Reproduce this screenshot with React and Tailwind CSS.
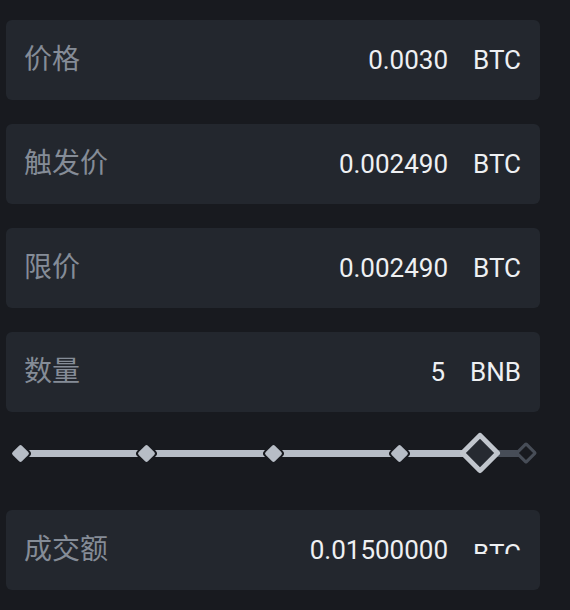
import { useState } from "react";

const fields = [
  { label: "价格", value: "0.0030", unit: "BTC" },
  { label: "触发价", value: "0.002490", unit: "BTC" },
  { label: "限价", value: "0.002490", unit: "BTC" },
  { label: "数量", value: "5", unit: "BNB" },
];

const FONT = { fontFamily: 'Roboto, "Noto Sans CJK SC", sans-serif' };

function Field({ label, value, unit, clipUnit }) {
  return (
    <div className="h-[80px] rounded-md bg-[#23272e] flex items-center justify-between pl-[18px] pr-[19px]">
      <span className="text-[28px] text-[#858c97] leading-[30px]">{label}</span>
      <div className="flex items-start h-[30px] leading-[30px] text-[26px] text-[#eef0f3] gap-[25px]">
        <span>{value}</span>
        {clipUnit ? (
          <span className="block h-[19px] overflow-hidden">
            <span className="block translate-y-[4px]">{unit}</span>
          </span>
        ) : (
          <span>{unit}</span>
        )}
      </div>
    </div>
  );
}

function Mark({ left }) {
  return (
    <div
      className="absolute top-1/2 w-[13px] h-[13px] -ml-[6.5px] -mt-[6.5px] rotate-45 rounded-[2px] bg-[#b7bdc6] ring-2 ring-[#181a1f]"
      style={{ left }}
    />
  );
}

function Slider() {
  const [pct] = useState(91);
  const marks = [0, 25, 50, 75];
  return (
    <div className="h-[60px] flex items-center px-[14px]">
      <div className="relative w-full h-[7px] pr-[6px]">
        <div className="absolute inset-y-0 left-0 right-0 bg-[#474d57]" />
        <div className="absolute inset-y-0 left-0 bg-[#b7bdc6]" style={{ width: `${pct}%` }} />
        {marks.map((m) => (
          <Mark key={m} left={`${m}%`} />
        ))}
        <div
          className="absolute top-1/2 w-[16px] h-[16px] -ml-[8px] -mt-[8px] rotate-45 rounded-[2px] border-[3px] border-[#474d57] bg-[#181a1f]"
          style={{ left: "100%" }}
        />
        <div
          className="absolute top-1/2 w-[30px] h-[30px] -ml-[15px] -mt-[15px] rotate-45 rounded-[3px] border-[5px] border-[#c1c6cd] bg-[#262a31]"
          style={{ left: `${pct}%` }}
        />
      </div>
    </div>
  );
}

export default function App() {
  return (
    <div className="min-h-[610px] w-[570px] bg-[#181a1f] pt-[20px] pl-[6px] pr-[30px]" style={FONT}>
      <div className="flex flex-col gap-[24px]">
        {fields.map((f) => (
          <Field key={f.label} {...f} />
        ))}
      </div>
      <div className="mt-[11px]">
        <Slider />
      </div>
      <div className="mt-[27px]">
        <Field label="成交额" value="0.01500000" unit="BTC" clipUnit />
      </div>
    </div>
  );
}
